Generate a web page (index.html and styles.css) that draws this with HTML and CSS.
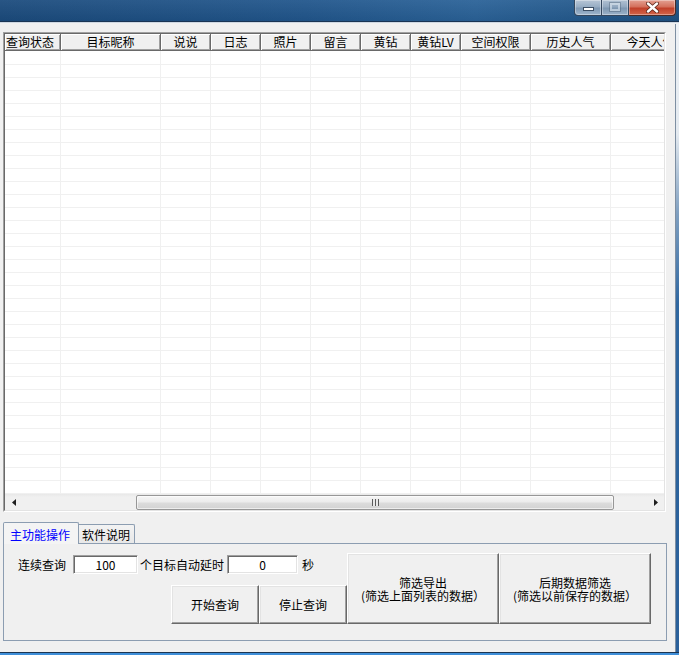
FILE: index.html
```html
<!DOCTYPE html>
<html lang="zh-CN">
<head>
<meta charset="utf-8">
<title>查询</title>
<link rel="stylesheet" href="styles.css">
</head>
<body>
<div class="window">
  <div class="titlebar">
    <div class="caption">
      <div class="cbtn min"><span class="min-ico"></span></div>
      <div class="cbtn max"><span class="max-ico"></span></div>
      <div class="cbtn close">
        <svg width="13" height="11" viewBox="0 0 13 11">
          <path d="M2 1.5 L11 9.5 M11 1.5 L2 9.5" stroke="#5a2318" stroke-width="4" stroke-linecap="round"/>
          <path d="M2 1.5 L11 9.5 M11 1.5 L2 9.5" stroke="#ffffff" stroke-width="2.4" stroke-linecap="round"/>
        </svg>
      </div>
    </div>
  </div>
  <div class="title-sep"></div>
  <div class="frame-body">
    <div class="client">
      <div class="lv-outer">
        <div class="lv">
          <div class="lv-head">
            <div class="hc c1 first">查询状态</div>
            <div class="hc c2">目标昵称</div>
            <div class="hc c3">说说</div>
            <div class="hc c3">日志</div>
            <div class="hc c3">照片</div>
            <div class="hc c3">留言</div>
            <div class="hc c3">黄钻</div>
            <div class="hc c3">黄钻LV</div>
            <div class="hc c9">空间权限</div>
            <div class="hc c10">历史人气</div>
            <div class="hc c10">今天人气</div>
          </div>
          <div class="lv-body">
            <div class="bc c1"></div>
            <div class="bc c2"></div>
            <div class="bc c3"></div>
            <div class="bc c3"></div>
            <div class="bc c3"></div>
            <div class="bc c3"></div>
            <div class="bc c3"></div>
            <div class="bc c3"></div>
            <div class="bc c9"></div>
            <div class="bc c10"></div>
            <div class="bc c10"></div>
          </div>
          <div class="hscroll">
            <div class="sarrow">
              <svg width="4" height="7" viewBox="0 0 4 7"><polygon points="4,0 4,7 0,3.5" fill="#1e1e1e"/></svg>
            </div>
            <div class="track">
              <div class="thumb" style="margin-left:114px;width:478px"><span class="grip"></span></div>
            </div>
            <div class="sarrow">
              <svg width="4" height="7" viewBox="0 0 4 7"><polygon points="0,0 0,7 4,3.5" fill="#1e1e1e"/></svg>
            </div>
          </div>
        </div>
      </div>

      <div class="tabs">
        <div class="tab active">主功能操作</div>
        <div class="tab">软件说明</div>
      </div>
      <div class="panel">
        <div class="left">
          <div class="row1">
            <span class="lbl l1">连续查询</span>
            <div class="edit e1">100</div>
            <span class="lbl l2">个目标自动延时</span>
            <div class="edit e2">0</div>
            <span class="lbl l3">秒</span>
          </div>
          <div class="btnrow">
            <button class="btn small">开始查询</button>
            <button class="btn small">停止查询</button>
          </div>
        </div>
        <button class="btn big"><span>筛选导出</span><span>(筛选上面列表的数据）</span></button>
        <button class="btn big"><span>后期数据筛选</span><span>(筛选以前保存的数据）</span></button>
      </div>
    </div>
    <div class="rframe"></div>
  </div>
  <div class="bframe"></div>
</div>
</body>
</html>
```

FILE: styles.css
```css
* { box-sizing: border-box; }
html, body { margin: 0; padding: 0; }
body {
  width: 679px;
  height: 655px;
  overflow: hidden;
  background: #f0f0f0;
  font-family: "Noto Sans CJK SC", "Liberation Sans", sans-serif;
  font-size: 12px;
  color: #000;
}
.window {
  width: 679px;
  height: 655px;
  display: flex;
  flex-direction: column;
}

/* title bar */
.titlebar {
  flex: none;
  height: 22px;
  border-bottom: 1px solid #1a3453;
  background:
    linear-gradient(to bottom, rgba(255,255,255,0.06), rgba(0,0,0,0.06)),
    linear-gradient(to right, #1b4b7d 0%, #21568c 45%, #2a6298 70%, #1f5283 100%);
  display: flex;
  justify-content: flex-end;
  align-items: flex-start;
  padding-right: 3px;
}
.caption { display: flex; height: 16px; }
.cbtn {
  height: 16px;
  border: 1px solid #34475e;
  border-top: none;
  display: flex;
  align-items: center;
  justify-content: center;
  box-shadow: inset 0 0 0 1px rgba(255,255,255,0.35);
}
.min {
  width: 28px;
  border-radius: 0 0 0 4px;
  background: linear-gradient(to bottom, #b7c6d6 0%, #97adc4 45%, #7f98b3 55%, #9fb6cd 100%);
}
.max {
  width: 27px;
  border-left: none;
  background: linear-gradient(to bottom, #b1c1d2 0%, #93a9c0 45%, #7e97b1 55%, #9bb2c9 100%);
}
.close {
  width: 47px;
  border-left: none;
  border-radius: 0 0 4px 0;
  background: linear-gradient(to bottom, #e3a092 0%, #d4705c 45%, #c1402a 55%, #d2654a 100%);
  border-color: #4a2a26;
}
.min-ico {
  width: 11px;
  height: 4px;
  margin-top: 3px;
  background: #fff;
  border: 1px solid #3b4d63;
}
.max-ico {
  width: 10px;
  height: 8px;
  margin-top: -2px;
  border: 2px solid rgba(230,238,246,0.55);
  outline: 1px solid rgba(60,80,100,0.35);
}
.close svg { margin-top: -1px; }

.title-sep {
  flex: none;
  height: 2px;
  border-top: 1px solid #cfd8e2;
  background: #f0f0f0;
}

.frame-body {
  flex: 1;
  display: flex;
  min-height: 0;
}
.client {
  flex: 1;
  padding: 8px 0 0 3px;
}
.rframe {
  flex: none;
  width: 4px;
  border-left: 1px solid #7e8fa2;
  background: linear-gradient(to bottom, #eef2f6 0px, #e4eaf0 110px, #7f9fc0 190px, #2f67a0 280px, #2b609a 100%);
}
.bframe {
  flex: none;
  height: 3px;
  border-top: 1px solid #1c3552;
  background: #3f8fd9;
}

/* list view */
.lv-outer {
  width: 663px;
  height: 480px;
  border: 1px solid;
  border-color: #a0a0a0 #ffffff #ffffff #a0a0a0;
}
.lv {
  height: 100%;
  border: 1px solid;
  border-color: #696969 #e3e3e3 #e3e3e3 #696969;
  background: #fff;
  display: flex;
  flex-direction: column;
  overflow: hidden;
}
.lv-head {
  flex: none;
  height: 17px;
  display: flex;
  background: #f0f0f0;
}
.hc {
  flex: none;
  height: 17px;
  background: #f0f0f0;
  border-right: 1px solid #696969;
  border-bottom: 1px solid #696969;
  box-shadow: inset 1px 1px 0 #ffffff, inset -1px -1px 0 #a0a0a0;
  text-align: center;
  line-height: 16px;
  white-space: nowrap;
  overflow: hidden;
}
.hc.first { text-align: left; padding-left: 1px; }
.c1 { width: 56px; }
.c2 { width: 100px; }
.c3 { width: 50px; }
.c9 { width: 70px; }
.c10 { width: 80px; }

.lv-body {
  flex: 1;
  display: flex;
  background-color: #fff;
  background-image: repeating-linear-gradient(to bottom, #ffffff 0px, #ffffff 12px, #f0f0f0 12px, #f0f0f0 13px);
  background-position: 0 1px;
}
.bc {
  flex: none;
  height: 100%;
  border-right: 1px solid #f0f0f0;
}

.hscroll {
  flex: none;
  height: 16px;
  display: flex;
  background: linear-gradient(to bottom, #e8e8e8 0px, #f0f0f0 3px, #f0f0f0 100%);
}
.sarrow {
  flex: none;
  width: 17px;
  display: flex;
  align-items: center;
  justify-content: center;
}
.track {
  flex: 1;
  display: flex;
  align-items: flex-start;
}
.thumb {
  flex: none;
  height: 15px;
  margin-top: 1px;
  border: 1px solid #979797;
  border-radius: 2px;
  background: linear-gradient(to bottom, #f6f6f6 0%, #ececec 45%, #dcdcdc 55%, #d2d2d2 100%);
  box-shadow: inset 0 0 0 1px rgba(255,255,255,0.6);
  display: flex;
  align-items: center;
  justify-content: center;
}
.grip {
  width: 7px;
  height: 7px;
  background: repeating-linear-gradient(to right, #5b5b5b 0px, #5b5b5b 1px, #e8e8e8 1px, #e8e8e8 3px);
}

/* tabs */
.tabs {
  position: relative;
  z-index: 1;
  margin-top: 10px;
  margin-bottom: -1px;
  height: 22px;
  display: flex;
  align-items: flex-end;
}
.tab {
  flex: none;
  height: 19px;
  margin-bottom: 1px;
  margin-left: -2px;
  padding: 2px 4px 0 4px;
  border: 1px solid #8c9db1;
  border-bottom: none;
  border-radius: 2px 2px 0 0;
  background: linear-gradient(to bottom, #f3f3f3, #e8e8e8);
  line-height: 16px;
  white-space: nowrap;
}
.tab.active {
  position: relative;
  z-index: 2;
  height: 22px;
  margin-bottom: 0;
  margin-left: 0;
  width: 76px;
  padding: 4px 0 0 6px;
  color: #0000ff;
  background: #f4f4f4;
}

.panel {
  width: 664px;
  height: 98px;
  border: 1px solid #8c9db1;
  background: #f0f0f0;
  display: flex;
  align-items: flex-start;
  padding-top: 9px;
}
.left {
  flex: none;
  width: 343px;
  padding-top: 2px;
  display: flex;
  flex-direction: column;
  gap: 11px;
}
.row1 {
  height: 19px;
  display: flex;
  align-items: center;
  padding-left: 14px;
}
.lbl { flex: none; white-space: nowrap; line-height: 14px; }
.l1 { margin-right: 7px; }
.l2 { margin-left: 2px; margin-right: 3px; }
.l3 { margin-left: 4px; }
.edit {
  flex: none;
  height: 19px;
  border: 1px solid;
  border-color: #a0a0a0 #ffffff #ffffff #a0a0a0;
  box-shadow: inset 1px 1px 0 #696969, inset -1px -1px 0 #e3e3e3;
  background: #fff;
  text-align: center;
  line-height: 17px;
  font-size: 12px;
}
.e1 { width: 65px; }
.e2 { width: 71px; }

.btnrow {
  display: flex;
  justify-content: flex-end;
}
.btn {
  flex: none;
  margin: 0;
  padding: 0;
  font-family: inherit;
  font-size: 12px;
  color: #000;
  background: #f0f0f0;
  border: 1px solid;
  border-color: #ffffff #696969 #696969 #ffffff;
  box-shadow: inset -1px -1px 0 #a0a0a0, inset 1px 1px 0 #e3e3e3;
  border-radius: 0;
}
.btn.small {
  width: 88px;
  height: 39px;
  line-height: 14px;
}
.btn.big {
  width: 152px;
  height: 71px;
  display: flex;
  flex-direction: column;
  align-items: center;
  justify-content: center;
  line-height: 13px;
  white-space: nowrap;
}
```
